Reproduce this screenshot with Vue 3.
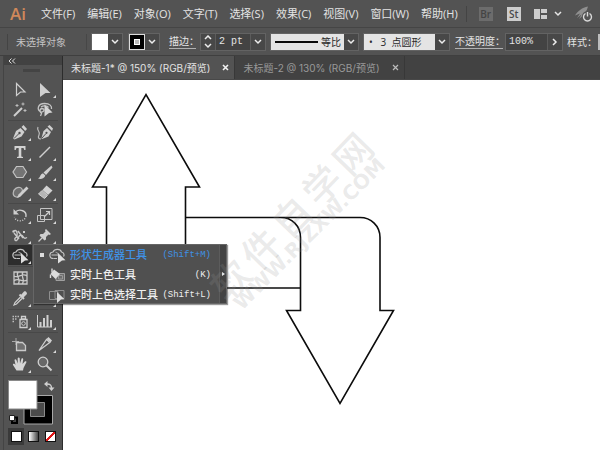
<script setup>
import { ref } from 'vue'

const menus = ['文件(F)', '编辑(E)', '对象(O)', '文字(T)', '选择(S)', '效果(C)', '视图(V)', '窗口(W)', '帮助(H)']

const tabs = [
  { name: '未标题-1* @ 150% (RGB/预览)', active: true },
  { name: '未标题-2 @ 130% (RGB/预览)', active: false }
]

const strokeWeight = ref('2 pt')
const opacity = ref('100%')

const builder = '<g fill="none" stroke="#c4c4c4" stroke-width="1.2"><path d="M6.5 13.5C2 13.500 1.500 7.500 6 7C7.500 3.500 13.500 3.500 14.500 7C17 7.500 17.500 10 16.500 11.500"/><path d="M6.500 13.500H10M4.500 10H11" /><path d="M8.500 7C10.500 7.500 11.500 9 11 11" stroke="#999"/></g><path d="M11 8L18.500 15.200L15 15.400L11 18.500Z" fill="#dedede"/>'
const liveBucket = '<path d="M9 8.500H17.500V15.500H9Z" fill="#6d6d6d" stroke="#a0a0a0"/><path d="M11.500 10.500h4v3.500h-4z" fill="none" stroke="#999"/><path d="M7 4.500L13 9L8.500 14L3.500 9Z" fill="#dcdcdc"/><path d="M5 7.500V3.500M3.500 9.500V13" stroke="#dcdcdc" stroke-width="1.400"/>'
const liveSelect = '<path d="M2.500 6.500H11V14.500H2.500ZM8 5.500H17V13.500H8Z" fill="none" stroke="#8f8f8f"/><path d="M10 7L17.500 14.300L14 14.500L10 18Z" fill="#dedede"/>'

const groups = [
  [
    { name: '选择工具', art: '<path d="M6.500 4.500L15 13H10.500L6.500 16.500Z" fill="none" stroke="#cfcfcf" stroke-width="1.200"/>' },
    { name: '直接选择工具', more: true, art: '<path d="M5 4L15.500 14H10.500L5 18Z" fill="#cfcfcf"/>' },
    { name: '魔棒工具', art: '<path d="M4 17L12 9" stroke="#cfcfcf" stroke-width="2"/><path d="M7 5v3M5.500 6.500h3M13 3.500v3M11.500 5h3M15 10v3M13.500 11.500h3" stroke="#bdbdbd" stroke-width="1"/>' },
    { name: '套索工具', art: '<path d="M6 13C1.500 11 2.500 4.500 9.500 4.500C15 4.500 17 7 16.500 10M6 13C9.500 13.500 10 9.500 7 9.500C4 10 5 13 6.500 14.500L5.500 17M6 8C8 6.500 12 6.500 13.500 8.500" fill="none" stroke="#c4c4c4" stroke-width="1.300"/><path d="M9.500 5.500L17.500 13.500L14 14L9.500 17.500Z" fill="#d6d6d6"/>' }
  ],
  [
    { name: '钢笔工具', more: true, art: '<path d="M3 16.500L6 9L10.500 6L14.500 10L11.500 14.500L4.500 17.500Z" fill="#cfcfcf"/><path d="M11.500 5L13.500 3L17 7L15.200 9Z" fill="#cfcfcf"/><path d="M4 16.500L9 11.500" stroke="#4f4f4f" stroke-width="1"/><circle cx="9.500" cy="11" r="1.200" fill="#4f4f4f"/>' },
    { name: '曲率工具', art: '<path d="M6.500 16L8.500 9L12 6L16 10L13.500 14.500L7 17Z" fill="#cfcfcf"/><path d="M12.500 4.500L14.500 3L18 6.500L17 9Z" fill="#cfcfcf"/><path d="M7 16L11 11.500" stroke="#4f4f4f"/><circle cx="11.500" cy="10.800" r="1.100" fill="#4f4f4f"/><path d="M3 5C1 9 6 9 4 13C3 15 3 17 6 17" fill="none" stroke="#bdbdbd" stroke-width="1.200"/>' },
    { name: '文字工具', more: true, art: '<path d="M4.500 4H15.500V8H14.300L13.500 6H11.300V14.600L13 15V16H7V15L8.700 14.600V6H6.500L5.700 8H4.500Z" fill="#d2d2d2"/>' },
    { name: '直线段工具', more: true, art: '<path d="M4.500 15.500L15 5" stroke="#cfcfcf" stroke-width="1.500"/>' },
    { name: '多边形工具', more: true, art: '<path d="M6.500 4.500H13L16.500 10L13 15.500H6.500L3 10Z" fill="#747474" stroke="#c4c4c4" stroke-width="1.200"/>' },
    { name: '画笔工具', more: true, art: '<path d="M16.500 3.500L17.500 5.500L11 13L8.500 10.500Z" fill="#cfcfcf"/><path d="M8 11.200L10.300 13.500C9.500 16.500 6 17.500 3 16.500C5.500 15.500 5 12 8 11.200Z" fill="#cfcfcf"/>' },
    { name: 'Shaper 工具', more: true, art: '<path d="M11 13C7 17 3 14.500 3.200 11C3.500 6.500 7.500 5 10 5.500C12 6 13 8 12 10.500" fill="#707070" stroke="#b8b8b8" stroke-width="1.200"/><path d="M16.500 4.500L18.500 6.500L10.500 14.500L7 16L8.500 12.500Z" fill="#cfcfcf"/>' },
    { name: '橡皮擦工具', more: true, art: '<path d="M11.500 3.500L17.500 8.500L13 13L7.500 8Z" fill="#d2d2d2"/><path d="M7 8.500L12.500 13.500L9.500 16.500L3.500 12Z" fill="#b4b4b4" stroke="#cfcfcf"/>' }
  ],
  [
    { name: '旋转工具', more: true, art: '<path d="M6 6.500C10 3.500 16.500 6 16 11" fill="none" stroke="#cfcfcf" stroke-width="1.400"/><path d="M16 11C15 17 6 17.500 4.500 12" fill="none" stroke="#cfcfcf" stroke-width="1.400" stroke-dasharray="1 1.500"/><path d="M3.500 4V9.500H9Z" fill="#cfcfcf"/>' },
    { name: '比例缩放工具', more: true, art: '<path d="M5.500 3.500H17V14.500H5.500ZM2.500 10.500H9.500V16.500H2.500Z" fill="none" stroke="#c4c4c4"/><path d="M9 12L14 7M11 6.500H14.500V10" fill="none" stroke="#cfcfcf" stroke-width="1.200"/>' },
    { name: '宽度工具', more: true, art: '<path d="M3 7C6 3 8 8 7 11C6 14 4 12 5 15C8 18 8 9 11 10C14 11 13 15 17 12.500M4 8L9 14M8 6L13 13" fill="none" stroke="#c9c9c9" stroke-width="1.400"/><path d="M2.500 5.500h2v2h-2zM13 6h2v2h-2z" fill="#cfcfcf"/>' },
    { name: '操控变形工具', more: true, art: '<path d="M11 4L16 9L14.500 10L13.500 9.500L11 12L11 14.500L9.500 15.500L4.500 10.500L5.500 9L8 9L10.500 6.500L10 5Z" fill="#cfcfcf"/><path d="M7 13L3.500 16.500" stroke="#cfcfcf" stroke-width="1.300"/>' },
    { name: '形状生成器工具', more: true, selected: true, art: builder },
    { name: '透视网格工具', more: true, art: '<path d="M3 15L9 5L17 9V15Z M6 10H17M11 6V15" fill="none" stroke="#c4c4c4"/>' }
  ],
  [
    { name: '网格工具', art: '<path d="M4 4H17V16H4Z M4 8C8 11 12 4 17 8M4 13C8 9 12 15 17 12M8 4C5 8 12 12 8 16M13 4C10 8 16 12 12 16" fill="none" stroke="#c9c9c9" stroke-width="1.300"/>' },
    { name: '渐变工具', art: '<path d="M4 5H16V15H4Z" fill="#999" stroke="#c4c4c4"/>' },
    { name: '吸管工具', more: true, art: '<path d="M10.500 7.500L14 3.500C15.500 2.500 18 5 16.500 6.500L13 10Z" fill="#cfcfcf"/><path d="M9.500 6.500L14 11" stroke="#cfcfcf" stroke-width="2"/><path d="M10.500 9L5 14.500L4 17L6.500 16L12 10.500" fill="none" stroke="#cfcfcf" stroke-width="1.200"/>' },
    { name: '混合工具', more: true, art: '<circle cx="7" cy="8" r="4" fill="#aaa"/><path d="M10 10h6v6h-6z" fill="#ccc"/>' }
  ],
  [
    { name: '符号喷枪工具', more: true, art: '<path d="M10 8.500H17V16.500H10ZM11.500 5.500H15.500V8H11.500Z" fill="none" stroke="#cfcfcf" stroke-width="1.300"/><circle cx="13.500" cy="12.500" r="1.800" fill="none" stroke="#cfcfcf"/><path d="M2.500 5.500H10M2.500 8H7M2.500 10.500H5" stroke="#bdbdbd" stroke-width="1.500" stroke-dasharray="1.500 1"/>' },
    { name: '柱形图工具', more: true, art: '<path d="M2.500 4V16H17" fill="none" stroke="#cfcfcf"/><path d="M5.500 11v5M9 7v9M12.500 4v12M16 9v7" stroke="#cfcfcf" stroke-width="2"/>' }
  ],
  [
    { name: '画板工具', art: '<path d="M2 7.500H9M6 4V11" stroke="#a8a8a8" fill="none"/><path d="M6.500 8.500H12.500L15.500 11.500V16.500H6.500Z" fill="#707070" stroke="#c9c9c9" stroke-width="1.300"/>' },
    { name: '切片工具', more: true, art: '<path d="M11.500 5.500L14.800 8.500L4 16.500Z" fill="none" stroke="#cfcfcf" stroke-width="1.300"/><path d="M13.500 3L17 6.500L15.500 8.500L11.500 5Z" fill="#cfcfcf"/>' },
    { name: '抓手工具', more: true, art: '<path d="M6.500 16.500L3 11C2.500 9.500 4.500 9 5.500 11L4.500 6C4.800 5 6 5 6.400 6L7.700 9.500L7.700 4.300C8 3.300 9.500 3.300 9.700 4.300L10 9.500L11.500 4.800C12 4 13.300 4.300 13.200 5.500L12.500 10L15 7.300C16 6.800 16.800 7.500 16.300 8.500L13.500 14L13 16.500Z" fill="#d6d6d6"/>' },
    { name: '缩放工具', art: '<circle cx="8" cy="8" r="4.800" fill="#686868" stroke="#cfcfcf" stroke-width="1.300"/><path d="M11.500 11.500L16.500 16.500" stroke="#cfcfcf" stroke-width="2"/>' }
  ]
]

const flyout = [
  { name: '形状生成器工具', key: '(Shift+M)', art: builder, current: true },
  { name: '实时上色工具', key: '(K)', art: liveBucket },
  { name: '实时上色选择工具', key: '(Shift+L)', art: liveSelect }
]

const stamp = [...'软件自学网'].map((glyph, i) => ({ glyph, x: i * 44 }))
</script>

<template>
  <div class="app">
    <header class="menubar">
      <span class="logo">Ai</span>
      <nav class="menus">
        <button v-for="m in menus" :key="m" type="button">{{ m }}</button>
      </nav>
      <div class="launch">
        <button type="button" class="badge dim">Br</button>
        <button type="button" class="badge">St</button>
        <button type="button" class="arrange" aria-label="排列文档">
          <svg width="30" height="12" viewBox="0 0 30 12">
            <path d="M1 1h6v10H1zM8 1h6v4H8zM8 7h6v4H8z" fill="#cdcdcd" />
            <path d="M22 4l3 3 3-3" fill="none" stroke="#e6e6e6" stroke-width="1.500" />
          </svg>
        </button>
        <button type="button" aria-label="GPU 性能">
          <svg width="18" height="16" viewBox="0 0 18 16">
            <path d="M0 9.500C3 5 7 1.500 13 0.500C12 5 9 9 4 13L6.500 8.500L2 12L5 7.500Z" fill="#8f8f8f" />
            <circle cx="12.500" cy="10.500" r="5.500" fill="#535353" />
            <path d="M10.500 7.500a4 4 0 1 0 4 0M12.500 6v4.500" fill="none" stroke="#dadada" stroke-width="1.400" />
          </svg>
        </button>
      </div>
    </header>

    <section class="control">
      <span class="status">未选择对象</span>
      <div class="combo swatch">
        <button type="button" class="paint white" aria-label="填色"></button>
        <button type="button" class="drop" aria-label="填色选项"><svg width="8" height="6"><path d="M1 1l3 3 3-3" /></svg></button>
      </div>
      <div class="combo swatch">
        <button type="button" class="paint ring" aria-label="描边颜色"><i></i></button>
        <button type="button" class="drop" aria-label="描边选项"><svg width="8" height="6"><path d="M1 1l3 3 3-3" /></svg></button>
      </div>
      <label class="linked weight-label" for="weight">描边：</label>
      <div class="combo weight">
        <button type="button" class="step" aria-label="调整粗细">
          <svg width="8" height="14"><path d="M1 4l3-3 3 3M1 9l3 3 3-3" /></svg>
        </button>
        <input id="weight" v-model="strokeWeight" type="text" />
        <button type="button" class="drop" aria-label="粗细列表"><svg width="8" height="6"><path d="M1 1l3 3 3-3" /></svg></button>
      </div>
      <div class="combo pick profile">
        <select aria-label="变量宽度配置文件"><option>等比</option></select>
        <span class="drop"><svg width="8" height="6"><path d="M1 1l3 3 3-3" /></svg></span>
      </div>
      <div class="combo pick brush">
        <select aria-label="画笔定义"><option>•&nbsp;&nbsp;&nbsp;3&nbsp;&nbsp;点圆形</option></select>
        <span class="drop"><svg width="8" height="6"><path d="M1 1l3 3 3-3" /></svg></span>
      </div>
      <label class="linked opacity-label" for="opacity">不透明度：</label>
      <div class="combo opacity">
        <input id="opacity" v-model="opacity" type="text" />
        <button type="button" class="drop" aria-label="不透明度滑块"><svg width="6" height="8"><path d="M1 1l3 3-3 3" /></svg></button>
      </div>
      <span class="style-label">样式：</span>
      <button type="button" class="style-chip" aria-label="图形样式"></button>
    </section>

    <main class="workspace">
      <aside class="toolbox">
        <button type="button" class="collapse" aria-label="折叠面板">
          <svg width="8" height="6"><path d="M3.500 0.500L1 3l2.500 2.500M7 0.500L4.500 3L7 5.500" /></svg>
        </button>
        <div class="grip"></div>
        <div v-for="(group, g) in groups" :key="g" class="group">
          <div v-for="tool in group" :key="tool.name" class="cell">
            <button type="button" class="tool" :class="{ selected: tool.selected, more: tool.more }" :aria-label="tool.name">
              <svg width="20" height="20" viewBox="0 0 20 20" v-html="tool.art"></svg>
            </button>
            <div v-if="tool.selected" class="flyout">
              <div class="choices">
                <button v-for="item in flyout" :key="item.key" type="button" :class="{ current: item.current }">
                  <i class="mark"></i>
                  <svg width="20" height="20" viewBox="0 0 20 20" v-html="item.art"></svg>
                  <span>{{ item.name }}</span>
                  <kbd>{{ item.key }}</kbd>
                </button>
              </div>
              <button type="button" class="tearoff" aria-label="拖出面板">
                <svg width="3" height="4"><path d="M0 0l3 2-3 2z" fill="#e8e8e8" /></svg>
              </button>
            </div>
          </div>
        </div>
        <svg class="paints" width="50" height="48" viewBox="0 0 50 48">
          <path d="M16 15.500H44.500V44H16Z" fill="#000" stroke="#a8a8a8" />
          <path d="M22.500 22.500H36.500V36.500H22.500Z" fill="#4a4a4a" stroke="#8a8a8a" />
          <path d="M0.500 0.500H29V29H0.500Z" fill="#fff" stroke="#8a8a8a" />
          <path d="M39 4C42.500 4 43.500 5 43.500 8" fill="none" stroke="#cfcfcf" stroke-width="1.400" />
          <path d="M39.500 1v6l-3.500-3zM40.500 7.500h6l-3 3.500z" fill="#cfcfcf" />
          <path d="M4 37.500H9V43H4Z" fill="#444" stroke="#000" stroke-width="2" />
          <path d="M1.500 35.500H6.500V40.500H1.500Z" fill="#fff" stroke="#222" />
        </svg>
        <div class="modes">
          <button type="button" class="on" aria-label="颜色"><i class="solid"></i></button>
          <button type="button" aria-label="渐变"><i class="fade"></i></button>
          <button type="button" aria-label="无"><i class="none"></i></button>
        </div>
      </aside>

      <section class="document">
        <div class="tabs">
          <div v-for="t in tabs" :key="t.name" class="tab" :class="{ active: t.active }">
            <button type="button">{{ t.name }}</button>
            <button type="button" class="close" aria-label="关闭">
              <svg width="7" height="7"><path d="M1 1l5 5M6 1L1 6" /></svg>
            </button>
          </div>
        </div>
        <div class="canvas">
          <svg width="100%" height="369" fill="none" stroke="#0c0c0c" stroke-width="1.600">
            <path d="M43.500 208V107H29.500L83 14.500L136.500 107H122.500V208" />
            <path d="M122.500 137.500H297C308 137.500 317 146 317 157.500V230.500H330.500L277 323.500L223.500 230.500H237.500V157.500C237.500 146 229 137.500 217.500 137.500" />
            <path d="M43.500 208H237.500" />
          </svg>
          <svg class="watermark" width="220" height="200" viewBox="0 0 220 200">
            <g transform="translate(39 208) rotate(-46)">
              <text class="seal" y="-6"><tspan v-for="s in stamp" :key="s.glyph" :x="s.x">{{ s.glyph }}</tspan></text>
            </g>
            <g transform="translate(49 211) rotate(-45)">
              <text class="site">WWW.RJZXW.COM</text>
            </g>
          </svg>
        </div>
      </section>
    </main>
  </div>
</template>

<style>
body {
  margin: 0;
  background: #535353;
}
</style>

<style scoped>
.app {
  display: flex;
  flex-direction: column;
  min-height: 100vh;
  overflow: hidden;
  background: #535353;
  color: #e4e4e4;
  font-family: "Open Sans", "Noto Sans CJK SC", sans-serif;
  font-size: 11px;
  line-height: 16px;
}
button,
input,
select {
  margin: 0;
  padding: 0;
  border: 0;
  border-radius: 0;
  background: none;
  color: inherit;
  font: inherit;
  white-space: nowrap;
}
svg {
  display: block;
  flex: none;
}

.menubar {
  display: flex;
  align-items: center;
  height: 27px;
  padding-left: 10px;
  border-bottom: 1px solid #454545;
}
.logo {
  width: 31px;
  color: #d0885a;
  font: 600 17px/24px "Open Sans", sans-serif;
}
.menus {
  display: flex;
  flex: none;
  gap: 12px;
}
.launch {
  display: flex;
  align-items: center;
  gap: 14px;
  margin-left: 8px;
  padding-left: 12px;
  border-left: 1px solid #444;
}
.badge {
  width: 14px;
  height: 14px;
  background: #cdcdcd;
  color: #4a4a4a;
  font-weight: 600;
  font-size: 10px;
  line-height: 14px;
}
.badge.dim {
  background: #6c6c6c;
  color: #444;
}
.arrange {
  margin: 0 -2px;
}

.control {
  display: flex;
  align-items: center;
  height: 27px;
  padding-left: 7px;
  border-bottom: 1px solid #3f3f3f;
  font-size: 10px;
}
.control > * {
  flex: none;
}
.status {
  width: 70px;
  padding-left: 8px;
  border-left: 1px solid #444;
  border-right: 1px solid #474747;
  margin-right: 4px;
  color: #c4c4c4;
}
.combo {
  display: flex;
  align-items: stretch;
  height: 18px;
  box-sizing: border-box;
  border: 1px solid #636363;
  background: #484848;
}
.drop,
.step {
  display: flex;
  align-items: center;
  justify-content: center;
  width: 14px;
}
.combo path {
  fill: none;
  stroke: #ececec;
  stroke-width: 1.500px;
}
.combo input {
  min-width: 0;
  box-sizing: border-box;
  padding-left: 3px;
  border-right: 1px solid #5c5c5c;
  background: #434343;
  font: 10px "Liberation Mono", monospace;
}
.swatch {
  margin-right: 5px;
}
.paint {
  display: flex;
  align-items: center;
  justify-content: center;
  width: 16px;
  box-sizing: border-box;
}
.white {
  background: #fff;
}
.ring {
  border: 1px solid #dcdcdc;
  background: #000;
}
.ring i {
  width: 4px;
  height: 4px;
  border: 1px solid #fff;
  background: #b8b8b8;
}
.linked {
  line-height: 14px;
  border-bottom: 1px solid #b0b0b0;
  white-space: nowrap;
}
.weight-label {
  width: 27px;
  margin-left: 4px;
}
.opacity-label {
  width: 48px;
}
.weight {
  width: 66px;
  margin: 0 4px;
}
.weight input {
  flex: 1;
  border-left: 1px solid #5c5c5c;
}
.pick {
  position: relative;
  margin-right: 4px;
}
.pick select {
  appearance: none;
  flex: 1;
  background: #e4e4e4;
  color: #2a2a2a;
}
.pick .drop {
  pointer-events: none;
}
.profile {
  width: 89px;
}
.profile select {
  padding-left: 50px;
  background: linear-gradient(#0a0a0a, #0a0a0a) 4px 7px / 43px 2px no-repeat #e4e4e4;
}
.brush {
  width: 87px;
  margin-right: 5px;
}
.brush select {
  padding-left: 5px;
}
.opacity {
  width: 58px;
  margin: 0 4px 0 2px;
}
.opacity input {
  flex: 1;
}
.style-label {
  width: 31px;
  white-space: nowrap;
}
.style-chip {
  width: 16px;
  height: 16px;
  background: #bdbdbd;
}

.workspace {
  display: flex;
  flex: 1;
}
.toolbox {
  display: flex;
  flex-direction: column;
  flex: none;
  width: 58px;
  margin-left: 3px;
  border-left: 1px solid #444;
  border-right: 1px solid #2c2c2c;
}
.collapse {
  height: 9px;
  padding-left: 4px;
  background: #424242;
}
.collapse path {
  fill: none;
  stroke: #e0e0e0;
}
.grip {
  width: 17px;
  height: 3px;
  margin: 4px auto 7px 19px;
  background: #444;
}
.group {
  display: grid;
  grid-template-columns: 25px 25px;
  margin: 0 4px 1px;
  padding-bottom: 1px;
  border-bottom: 1px solid #484848;
}
.cell {
  position: relative;
  height: 20px;
}
.tool {
  position: relative;
  display: flex;
  align-items: center;
  justify-content: center;
  width: 24px;
  height: 20px;
}
.tool.selected {
  background: #2d2d2d;
}
.more::after {
  content: "";
  position: absolute;
  right: 1px;
  bottom: 1px;
  border-left: 3px solid transparent;
  border-bottom: 3px solid #d8d8d8;
}
.flyout {
  position: absolute;
  z-index: 2;
  top: -1px;
  left: 25px;
  display: flex;
  width: 194px;
  height: 60px;
  box-sizing: border-box;
  border: 1px solid #666;
  background: #505050;
  box-shadow: 1px 1px 1px rgba(0, 0, 0, 0.4);
}
.choices {
  display: grid;
  flex: 1;
  grid-template-rows: repeat(3, 1fr);
}
.choices button {
  display: flex;
  align-items: center;
  gap: 3px;
  padding: 0 8px 0 6px;
  color: #efefef;
  font-weight: 500;
}
.choices .current {
  color: #3f92e6;
}
.mark {
  width: 4px;
  height: 4px;
}
.current .mark {
  background: #dcdcdc;
}
kbd {
  margin-left: auto;
  font: 9px "Liberation Mono", monospace;
}
.tearoff {
  display: flex;
  align-items: center;
  justify-content: center;
  width: 7px;
  border-left: 1px solid #5c5c5c;
  background: #434343;
}
.paints {
  margin: 3px 0 0 4px;
}
.modes {
  display: flex;
  gap: 1px;
  margin-left: 4px;
}
.modes button {
  display: flex;
  align-items: center;
  justify-content: center;
  width: 16px;
  height: 17px;
}
.modes .on {
  background: #3a3a3a;
}
.modes i {
  width: 9px;
  height: 9px;
  border: 1px solid #111;
}
.solid {
  background: #fff;
}
.fade {
  background: linear-gradient(90deg, #fff, #444);
}
.none {
  background: linear-gradient(135deg, #fff 40%, #e01818 41%, #e01818 59%, #fff 60%);
}

.document {
  display: flex;
  flex: 1;
  flex-direction: column;
  min-width: 0;
  background: #fff;
}
.tabs {
  display: flex;
  height: 23px;
  border-bottom: 1px solid #484848;
  background: #424242;
  font-family: Inter, "Noto Sans CJK SC", sans-serif;
  font-size: 10px;
}
.tab {
  display: flex;
  align-items: center;
  gap: 12px;
  padding: 0 5px 0 8px;
  border-right: 1px solid #383838;
  color: #999;
}
.tab.active {
  background: #535353;
  color: #e4e4e4;
}
.close path {
  stroke: #bbb;
  stroke-width: 1.200px;
}
.active .close path {
  stroke: #f2f2f2;
  stroke-width: 1.600px;
}
.canvas {
  position: relative;
  flex: 1;
}
.watermark {
  position: absolute;
  z-index: 3;
  top: 20px;
  left: 130px;
  overflow: visible;
  pointer-events: none;
  fill: rgba(150, 150, 150, 0.2);
}
.seal {
  font: 500 38px "Noto Sans CJK SC", sans-serif;
}
.site {
  font: bold 20px "DejaVu Sans", sans-serif;
}
</style>
